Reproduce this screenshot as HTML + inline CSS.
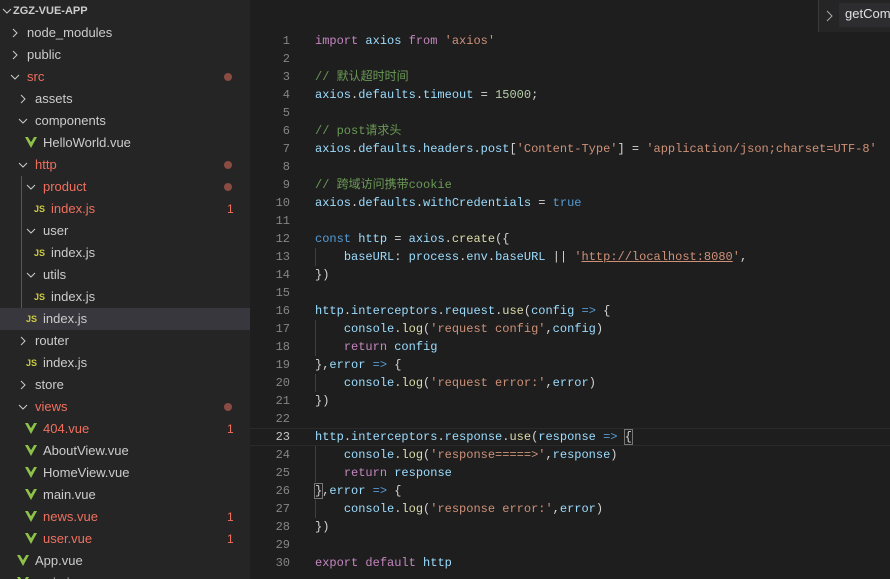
<!DOCTYPE html>
<html style="width:890px;height:579px;overflow:hidden"><head><meta charset="utf-8"><style>
*{margin:0;padding:0;box-sizing:border-box}
body{width:890px;height:579px;overflow:hidden;background:#1e1e1e;position:relative;font-family:"Liberation Sans","Noto Sans CJK SC",sans-serif}
#side{position:absolute;left:0;top:0;width:250px;height:579px;background:#252526}
#rows{position:absolute;left:0;top:0;width:250px;height:579px;overflow:hidden}
.r{position:absolute;left:0;width:250px;height:22px;line-height:22px;font-size:13px;color:#cccccc;white-space:nowrap}
.r .t{position:absolute;top:0}
.red{color:#f0705e!important}
.ch{position:absolute;top:0;width:12px;height:22px}
.ch svg{position:absolute;top:5px;left:0}
.dot{position:absolute;left:224px;top:7px;width:8px;height:8px;border-radius:50%;background:#8a4b42}
.b{position:absolute;left:227px;top:0;color:#f0705e;font-size:12px}
.js{position:absolute;top:0;font-size:9px;font-weight:bold;color:#cbcb41;font-family:"Liberation Sans",sans-serif}
.v{position:absolute;top:5px}
#code{position:absolute;left:250px;top:0;width:640px;height:579px;overflow:hidden}
.l{position:absolute;left:0;width:640px;height:18px;line-height:18px;font-family:"Liberation Mono","Noto Sans CJK SC",monospace;font-size:12px;color:#d4d4d4;white-space:pre}
.n{position:absolute;right:600px;width:40px;text-align:right;color:#858585}
.c{position:absolute;left:65px}
.k{color:#c586c0}.vv{color:#9cdcfe}.f{color:#dcdcaa}.s{color:#ce9178}.cm{color:#6a9955}.nu{color:#b5cea8}.bl{color:#569cd6}
.g{position:absolute;left:65px;width:1px;background:#404040}
</style></head><body>
<div id="side">
<div class="r" style="top:0;font-size:11px;font-weight:bold"><span class="ch" style="left:2px"><svg width="10" height="12"><path d="M1 4l4 4 4-4" stroke="#ccc" fill="none"/></svg></span><span class="t" style="left:13px">ZGZ-VUE-APP</span></div>
</div>
<div id="rows"></div>
<div style="position:absolute;left:21px;top:176px;width:1px;height:132px;background:#585858"></div>
<div id="code">
<div style="position:absolute;left:0;top:428px;width:640px;height:18px;border-top:1px solid #2a2a2a;border-bottom:1px solid #2a2a2a"></div>
</div>
<div style="position:absolute;left:818px;top:0;width:72px;height:32px;background:#252526;border-left:1px solid #3a3a3a"></div>
<div style="position:absolute;left:839px;top:3px;width:51px;height:24px;background:#2d2d30"></div>
<svg style="position:absolute;left:826px;top:10px" width="8" height="12"><path d="M1 1l5 5-5 5" stroke="#aaa" fill="none"/></svg>
<div style="position:absolute;left:845px;top:6px;font-size:13px;color:#e0e0e0;white-space:nowrap">getCom</div>
<script>
const rows=[
['node_modules','c',13,27],['public','c',13,27],['src','o',13,27,1,1],['assets','c',21,35],['components','o',21,35],
['HelloWorld.vue','v',27,43],['http','o',21,35,1,1],['product','o',29,43,1,1],['index.js','j',35,51,1,0,1],
['user','o',29,43],['index.js','j',35,51],['utils','o',29,43],['index.js','j',35,51],['index.js','j',27,43,0,0,0,1],
['router','c',21,35],['index.js','j',27,43],['store','c',21,35],['views','o',21,35,1,1],['404.vue','v',27,43,1,0,1],
['AboutView.vue','v',27,43],['HomeView.vue','v',27,43],['main.vue','v',27,43],['news.vue','v',27,43,1,0,1],['user.vue','v',27,43,1,0,1],['App.vue','v',19,35],['main.js','v',19,35]];
let h='';
rows.forEach((r,i)=>{const top=22*(i+1);
let ic='';
if(r[1]=='c')ic=`<span class="ch" style="left:${r[2]-3}px"><svg width="10" height="12"><path d="M3 2l4 4-4 4" stroke="#ccc" fill="none"/></svg></span>`;
if(r[1]=='o')ic=`<span class="ch" style="left:${r[2]-3}px"><svg width="10" height="12"><path d="M1 4l4 4 4-4" stroke="#ccc" fill="none"/></svg></span>`;
if(r[1]=='j')ic=`<span class="js" style="left:${r[2]-1}px">JS</span>`;
if(r[1]=='v')ic=`<svg class="v" style="left:${r[2]-2}px" width="12" height="11"><path d="M0 0h3l3 5 3-5h3L6 11z" fill="#8dc149"/><path d="M3 0h2l1 2 1-2h2L6 5z" fill="#252526"/></svg>`;
h+=`<div class="r${r[4]?' red':''}" style="top:${top}px;${r[7]?'background:#37373d':''}">${ic}<span class="t${r[4]?' red':''}" style="left:${r[3]}px">${r[0]}</span>${r[5]?'<span class="dot"></span>':''}${r[6]?'<span class="b">1</span>':''}</div>`;});
document.getElementById('rows').innerHTML=h;
const L=[
'<span class="k">import</span> <span class="vv">axios</span> <span class="k">from</span> <span class="s">\'axios\'</span>',
'',
'<span class="cm">// 默认超时时间</span>',
'<span class="vv">axios</span>.<span class="vv">defaults</span>.<span class="vv">timeout</span> = <span class="nu">15000</span>;',
'',
'<span class="cm">// post请求头</span>',
'<span class="vv">axios</span>.<span class="vv">defaults</span>.<span class="vv">headers</span>.<span class="vv">post</span>[<span class="s">\'Content-Type\'</span>] = <span class="s">\'application/json;charset=UTF-8\'</span>',
'',
'<span class="cm">// 跨域访问携带cookie</span>',
'<span class="vv">axios</span>.<span class="vv">defaults</span>.<span class="vv">withCredentials</span> = <span class="bl">true</span>',
'',
'<span class="bl">const</span> <span class="vv">http</span> = <span class="vv">axios</span>.<span class="f">create</span>({',
'    <span class="vv">baseURL</span>: <span class="vv">process</span>.<span class="vv">env</span>.<span class="vv">baseURL</span> || <span class="s">\'<u>http://localhost:8080</u>\'</span>,',
'})',
'',
'<span class="vv">http</span>.<span class="vv">interceptors</span>.<span class="vv">request</span>.<span class="f">use</span>(<span class="vv">config</span> <span class="bl">=&gt;</span> {',
'    <span class="vv">console</span>.<span class="f">log</span>(<span class="s">\'request config\'</span>,<span class="vv">config</span>)',
'    <span class="k">return</span> <span class="vv">config</span>',
'},<span class="vv">error</span> <span class="bl">=&gt;</span> {',
'    <span class="vv">console</span>.<span class="f">log</span>(<span class="s">\'request error:\'</span>,<span class="vv">error</span>)',
'})',
'',
'<span class="vv">http</span>.<span class="vv">interceptors</span>.<span class="vv">response</span>.<span class="f">use</span>(<span class="vv">response</span> <span class="bl">=&gt;</span> <span style="outline:1px solid #777">{</span>',
'    <span class="vv">console</span>.<span class="f">log</span>(<span class="s">\'response=====&gt;\'</span>,<span class="vv">response</span>)',
'    <span class="k">return</span> <span class="vv">response</span>',
'<span style="outline:1px solid #777">}</span>,<span class="vv">error</span> <span class="bl">=&gt;</span> {',
'    <span class="vv">console</span>.<span class="f">log</span>(<span class="s">\'response error:\'</span>,<span class="vv">error</span>)',
'})',
'',
'<span class="k">export</span> <span class="k">default</span> <span class="vv">http</span>'];
let c='';
L.forEach((s,i)=>{c+=`<div class="l" style="top:${32+18*i}px"><span class="n"${i==22?' style="color:#c6c6c6"':''}>${i+1}</span><span class="c">${s}</span></div>`;});
[[13,13],[17,18],[20,20],[24,25],[27,27]].forEach(([a,b])=>{c+=`<div class="g" style="top:${32+18*(a-1)}px;height:${18*(b-a+1)}px"></div>`;});
document.getElementById('code').insertAdjacentHTML('beforeend',c);
</script>
</body></html>
